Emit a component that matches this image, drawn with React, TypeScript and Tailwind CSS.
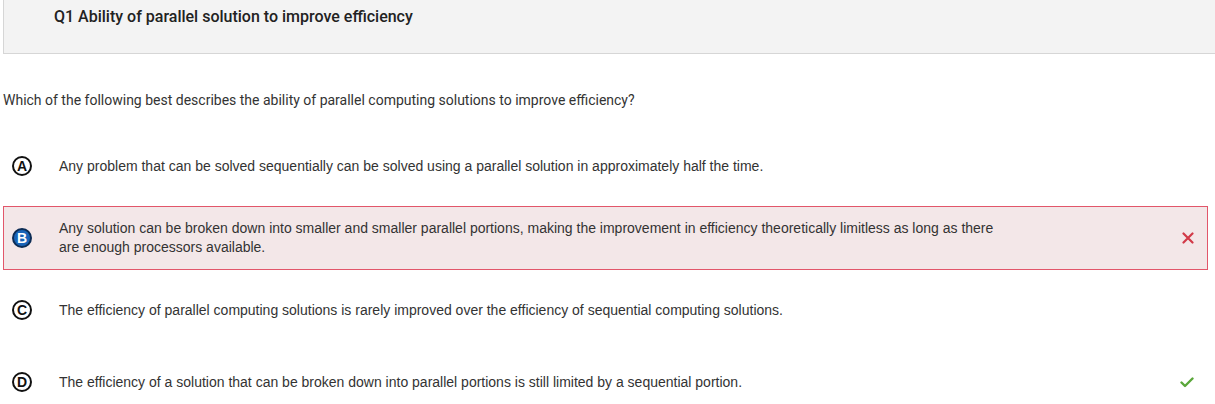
import React from "react";

const opts = [
  { l: "A", t: "Any problem that can be solved sequentially can be solved using a parallel solution in approximately half the time." },
  { l: "B", t: "Any solution can be broken down into smaller and smaller parallel portions, making the improvement in efficiency theoretically limitless as long as there are enough processors available.", wrong: true },
  { l: "C", t: "The efficiency of parallel computing solutions is rarely improved over the efficiency of sequential computing solutions." },
  { l: "D", t: "The efficiency of a solution that can be broken down into parallel portions is still limited by a sequential portion.", correct: true },
];

export default function App() {
  return (
    <div className="w-[1215px] h-[404px] overflow-hidden bg-white">
      <div className="ml-[3px] h-[54px] bg-[#f3f3f3] border-l border-b border-[#d6d6d6] pl-[50px] pt-[7px]">
        <div className="text-[16px] leading-[20px] font-medium text-[#222]" style={{ fontFamily: "Roboto, sans-serif" }}>
          Q1 Ability of parallel solution to improve efficiency
        </div>
      </div>
      <div className="pl-[3px] pt-[36px] text-[14px] leading-[20px] text-[#333]" style={{ fontFamily: "Roboto, sans-serif" }}>
        Which of the following best describes the ability of parallel computing solutions to improve efficiency?
      </div>
      <div className="mt-[24px] flex flex-col gap-[8px] pl-[3px] pr-[7px]">
        {opts.map((o) => (
          <div
            key={o.l}
            className={`h-[64px] flex items-center border ${o.wrong ? "border-[#e2566a] bg-[#f3e7e8]" : "border-transparent"}`}
          >
            <div className="w-[55px] pl-[8px] shrink-0">
              {o.wrong ? (
                <div className="w-[20px] h-[20px] rounded-full bg-[#1a64b8] border-2 border-[#0c2c55] flex items-center justify-center text-white text-[14px] font-bold leading-none" style={{ fontFamily: "'Liberation Sans', Arial, sans-serif" }}>
                  {o.l}
                </div>
              ) : (
                <div className="w-[20px] h-[20px] rounded-full border-2 border-[#111] flex items-center justify-center text-[#111] text-[14px] font-bold leading-none" style={{ fontFamily: "'Liberation Sans', Arial, sans-serif" }}>
                  {o.l}
                </div>
              )}
            </div>
            <div className="w-[945px] text-[14px] leading-[19px] text-[#333]" style={{ fontFamily: "'Liberation Sans', Arial, sans-serif" }}>
              {o.t}
            </div>
            <div className="flex-1 flex justify-end pr-[13px]">
              {o.wrong && (
                <svg width="12" height="12" viewBox="0 0 12 12">
                  <path d="M1.5 1.5 L10.5 10.5 M10.5 1.5 L1.5 10.5" stroke="#d23a48" strokeWidth="2.2" strokeLinecap="round" />
                </svg>
              )}
              {o.correct && (
                <svg width="14" height="11" viewBox="0 0 14 11">
                  <path d="M1.5 5.5 L5 9 L12.5 1.5" stroke="#5aa73a" strokeWidth="2.4" fill="none" strokeLinecap="round" strokeLinejoin="round" />
                </svg>
              )}
            </div>
          </div>
        ))}
      </div>
    </div>
  );
}
